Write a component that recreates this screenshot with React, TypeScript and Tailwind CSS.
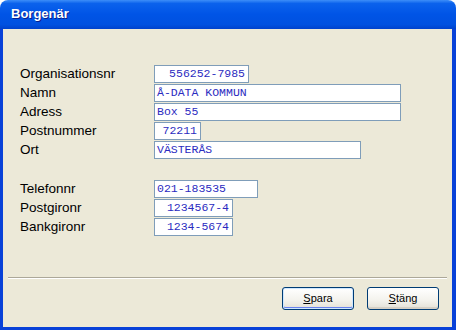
import React from "react";

const Field = ({ label, value, w, align = "left" }: { label: string; value: string; w: string; align?: "left" | "right" }) => (
  <div className="flex items-center h-[18px]">
    <div className="w-[134px] text-[13.5px] leading-none text-black" style={{}}>{label}</div>
    <div
      className={`${w} h-[18px] bg-white border border-[#7F9DB9] flex items-center ${align === "right" ? "justify-end pr-[3px]" : "pl-[2px]"} text-[11.5px] text-[#2b2bbf] whitespace-pre [font-family:'Liberation_Mono',monospace]`}
    >
      {value}
    </div>
  </div>
);

const Btn = ({ first, rest, def }: { first: string; rest: string; def?: boolean }) => (
  <div
    className={`w-[72px] h-[23px] rounded-[3px] border border-[#003C74] bg-[linear-gradient(#ffffff,#f3f2ec_60%,#e3e0d6)] flex items-center justify-center text-[11px] text-black ${def ? "shadow-[inset_0_0_0_1px_#CEE7FF,inset_0_-1px_0_1px_#6982EE]" : "shadow-[inset_0_-2px_0_#D6D0C5]"}`}
  >
    <span><span className="underline">{first}</span>{rest}</span>
  </div>
);

export default function App() {
  return (
    <div className="w-[456px] h-[330px] bg-white flex flex-col [font-family:'Liberation_Sans',Arial,sans-serif]">
      <div className="h-[29px] rounded-t-[8px] bg-[linear-gradient(#3D8EF8_0%,#0B62EC_12%,#0054E6_50%,#0051E0_85%,#0042CC_100%)] flex items-center pl-[11px] pb-[1px]">
        <span className="text-white font-bold text-[13px] [text-shadow:1px_1px_0_#0A1E8C]">Borgenär</span>
      </div>
      <div className="flex-1 flex flex-col bg-[#ECE9D8] border-l-[3px] border-r-[4px] border-b-[3px] border-[#0841D8]">
        <div className="pt-[36px] pl-[17px] flex flex-col gap-[1px]">
          <Field label="Organisationsnr" value="556252-7985" w="w-[95px]" align="right" />
          <Field label="Namn" value="Å-DATA KOMMUN" w="w-[247px]" />
          <Field label="Adress" value="Box 55" w="w-[247px]" />
          <Field label="Postnummer" value="72211" w="w-[47px]" align="right" />
          <Field label="Ort" value="VÄSTERÅS" w="w-[207px]" />
          <div className="h-[19px]" />
          <Field label="Telefonnr" value="021-183535" w="w-[104px]" />
          <Field label="Postgironr" value="1234567-4" w="w-[79px]" align="right" />
          <Field label="Bankgironr" value="1234-5674" w="w-[79px]" align="right" />
        </div>
        <div className="flex-1" />
        <div className="mx-[5px] border-t border-[#ACA899] border-b border-b-white" />
        <div className="flex justify-end gap-[13px] pt-[8px] pb-[17px] pr-[13px]">
          <Btn first="S" rest="para" def />
          <Btn first="S" rest="täng" />
        </div>
      </div>
    </div>
  );
}
